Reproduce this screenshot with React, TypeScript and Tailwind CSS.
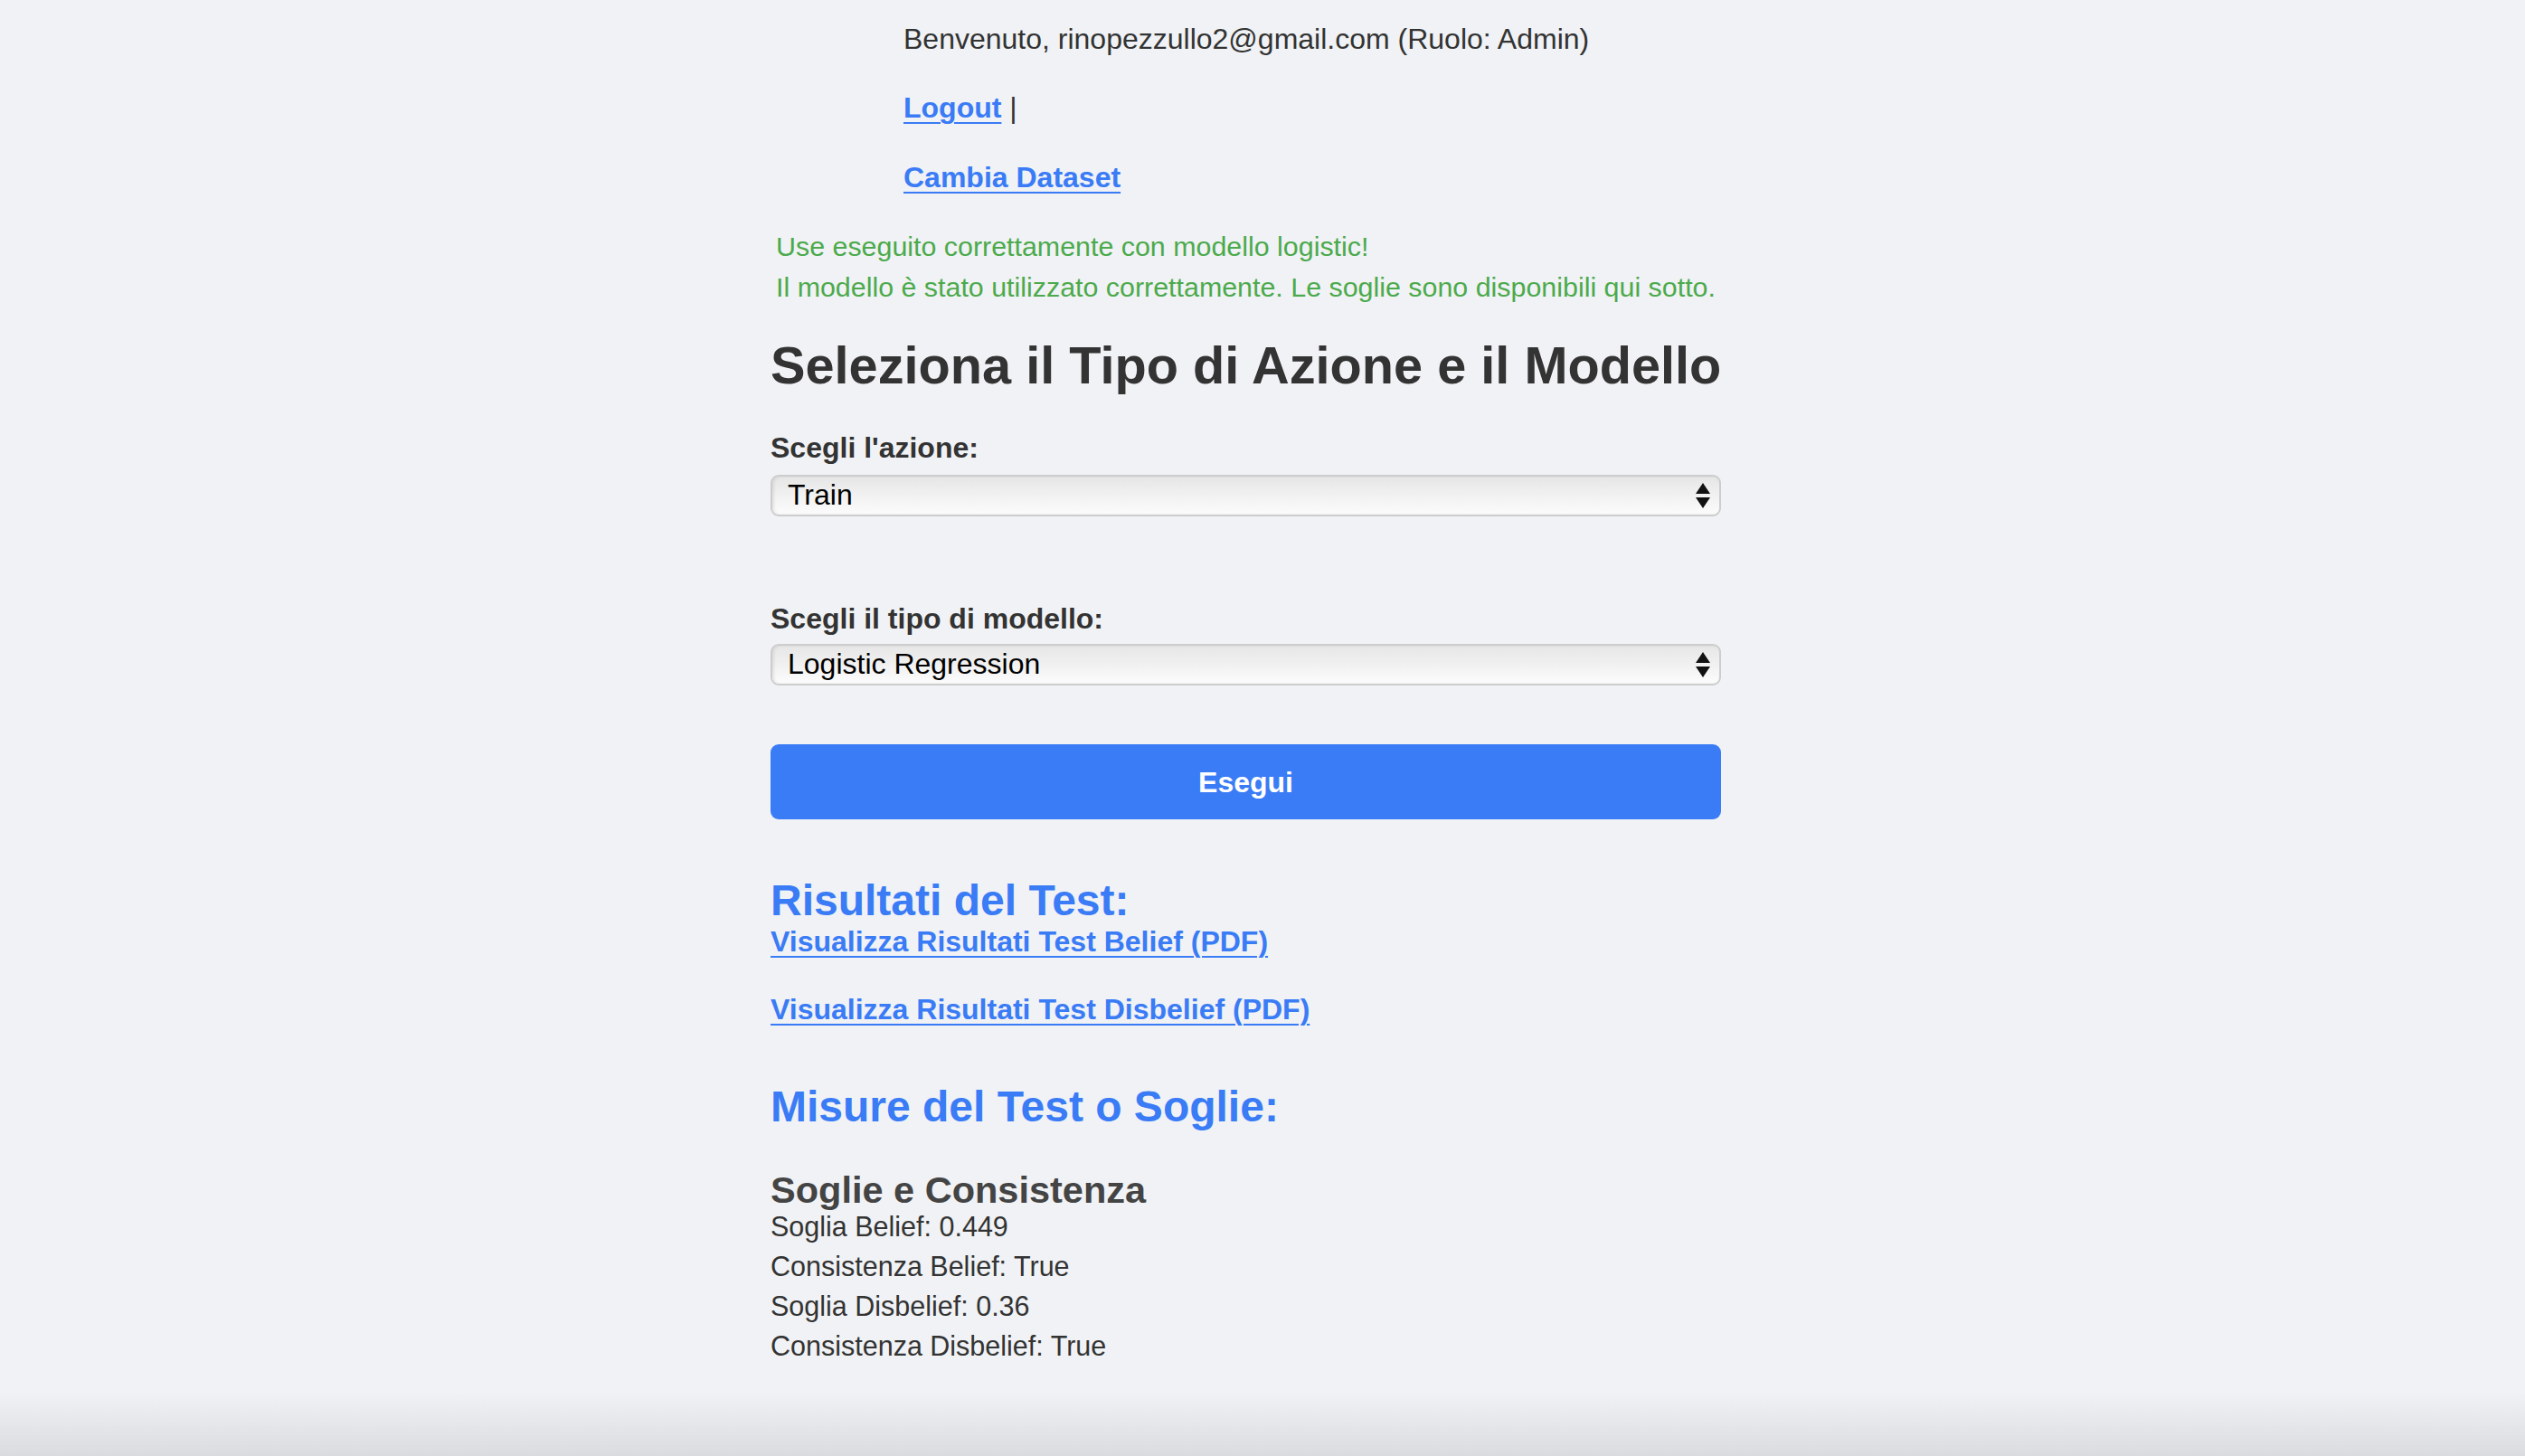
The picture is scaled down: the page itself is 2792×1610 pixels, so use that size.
import { useState } from "react";

const font = { fontFamily: '"Liberation Sans", Arial, Helvetica, sans-serif' };

function Arrows() {
  return (
    <svg width="16" height="28" viewBox="0 0 16 28" className="pointer-events-none absolute right-[12px] top-1/2 -translate-y-1/2">
      <polygon points="8,0 16,12 0,12" fill="#111" />
      <polygon points="0,16 16,16 8,28" fill="#111" />
    </svg>
  );
}

function NativeSelect({
  value,
  onChange,
  options,
  className,
}: {
  value: string;
  onChange: (v: string) => void;
  options: { value: string; label: string }[];
  className?: string;
}) {
  return (
    <div className={`relative ${className ?? ""}`}>
      <select
        value={value}
        onChange={(e) => onChange(e.target.value)}
        style={font}
        className="block h-[46px] w-full appearance-none rounded-[9px] border-2 border-[#cdcdcd] bg-gradient-to-b from-[#e6e6e6] via-[#f1f1f1] to-[#fcfcfc] pb-[2px] pl-[17px] pr-[40px] text-[32px] leading-[40px] text-black shadow-[inset_2px_0_3px_rgba(0,0,0,0.08)] outline-none"
      >
        {options.map((o) => (
          <option key={o.value} value={o.value}>
            {o.label}
          </option>
        ))}
      </select>
      <Arrows />
    </div>
  );
}

export default function App() {
  const [azione, setAzione] = useState("train");
  const [modello, setModello] = useState("logistic");

  const soglie = [
    "Soglia Belief: 0.449",
    "Consistenza Belief: True",
    "Soglia Disbelief: 0.36",
    "Consistenza Disbelief: True",
  ];

  return (
    <div style={font} className="relative min-h-screen bg-[#f0f2f5] text-[#333]">
      <div className="flex justify-center pr-[37px]">
        <main className="w-[1051px] pb-[100px]">
          {/* utente */}
          <div className="pl-[147px]">
            <div className="mt-[23px] text-[32px] leading-[40px]">
              Benvenuto, rinopezzullo2@gmail.com (Ruolo: Admin)
            </div>
            <div className="mt-[36px] text-[32px] leading-[40px]">
              <a href="#" className="font-bold text-[#3a7bf6] underline decoration-2 underline-offset-[5px]">
                Logout
              </a>{" "}
              |
            </div>
            <div className="mt-[37px] text-[32px] leading-[40px]">
              <a href="#" className="font-bold text-[#3a7bf6] underline decoration-2 underline-offset-[5px]">
                Cambia Dataset
              </a>
            </div>
          </div>

          {/* messaggi */}
          <div className="mt-[34px] whitespace-nowrap pl-[6px] text-[30.4px] leading-[45px] text-[#4caa4c]">
            <div>Use eseguito correttamente con modello logistic!</div>
            <div>Il modello è stato utilizzato correttamente. Le soglie sono disponibili qui sotto.</div>
          </div>

          <h1 className="mt-[32px] whitespace-nowrap text-[57.7px] font-bold leading-[64px] text-[#333]">
            Seleziona il Tipo di Azione e il Modello
          </h1>

          <label className="mt-[39px] block text-[32px] font-bold leading-[40px]">Scegli l'azione:</label>
          <NativeSelect
            className="mt-[10px]"
            value={azione}
            onChange={setAzione}
            options={[
              { value: "train", label: "Train" },
              { value: "use", label: "Use" },
            ]}
          />

          <label className="mt-[93px] block text-[32px] font-bold leading-[40px]">Scegli il tipo di modello:</label>
          <NativeSelect
            className="mt-[8px]"
            value={modello}
            onChange={setModello}
            options={[
              { value: "logistic", label: "Logistic Regression" },
              { value: "svm", label: "SVM" },
            ]}
          />

          <button className="mt-[65px] block h-[83px] w-full rounded-[9px] bg-[#3a7bf6] text-[32px] font-bold text-white">
            Esegui
          </button>

          {/* risultati */}
          <h2 className="mt-[64px] text-[48px] font-bold leading-[52px] text-[#3a7bf6]">Risultati del Test:</h2>
          <div className="-mt-[2px] text-[32px] leading-[42px]">
            <a href="#" className="font-bold text-[#3a7bf6] underline decoration-2 underline-offset-[5px]">
              Visualizza Risultati Test Belief (PDF)
            </a>
          </div>
          <div className="mt-[33px] text-[32px] leading-[42px]">
            <a href="#" className="font-bold text-[#3a7bf6] underline decoration-2 underline-offset-[5px]">
              Visualizza Risultati Test Disbelief (PDF)
            </a>
          </div>

          <h2 className="mt-[59px] text-[48px] font-bold leading-[56px] text-[#3a7bf6]">Misure del Test o Soglie:</h2>

          <h3 className="mt-[45px] text-[41.5px] font-bold leading-[38px] text-[#444]">Soglie e Consistenza</h3>
          <div className="-mt-[1px] text-[30.5px] leading-[44px]">
            {soglie.map((s) => (
              <div key={s}>{s}</div>
            ))}
          </div>
        </main>
      </div>

      <div className="pointer-events-none fixed inset-x-0 bottom-0 h-[70px] bg-gradient-to-b from-transparent to-[#dadbde]" />
    </div>
  );
}
